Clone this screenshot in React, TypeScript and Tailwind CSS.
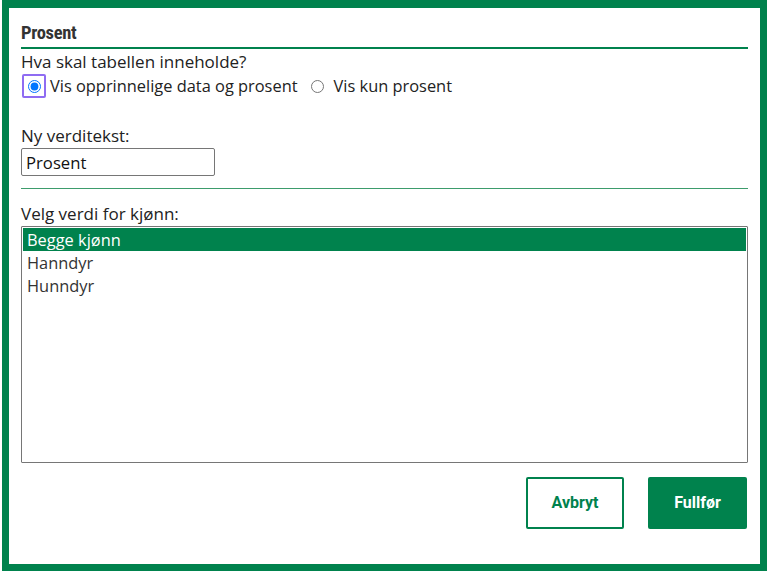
import React, { useState } from 'react';

const GREEN = '#00824d';

export default function App() {
  const [mode, setMode] = useState<'both' | 'pct'>('both');
  const [label, setLabel] = useState('Prosent');
  const [selected, setSelected] = useState(0);
  const options = ['Begge kjønn', 'Hanndyr', 'Hunndyr'];

  return (
    <div className="w-[768px] h-[572px] bg-white">
      <div className="ml-[2px] w-[765px] h-[571px] border-[7px] border-t-[8px] border-[#00824d] bg-white px-[12px] flex flex-col font-['Open_Sans',sans-serif] text-[17px] text-[#222]">
        {/* Header */}
        <div className="pt-[14px] pb-[3px] border-b-2 border-[#00824d]">
          <h2 className="h-[22px] leading-[22px] text-[18.5px] font-bold text-[#333] font-['Roboto_Condensed','DejaVu_Sans_Condensed','Roboto',sans-serif] tracking-[-0.3px]">
            Prosent
          </h2>
        </div>

        {/* Radio group */}
        <div className="mt-px leading-[24px]">Hva skal tabellen inneholde?</div>
        <div className="flex items-center h-[24px] leading-[24px] text-[16.4px]">
          <label className="flex items-center">
            <span className="w-[24px] h-[24px] ml-px border-2 border-[#8f6cf2] rounded-[2px] flex items-center justify-center">
              <input
                type="radio"
                name="mode"
                checked={mode === 'both'}
                onChange={() => setMode('both')}
                className="m-0 w-[13px] h-[13px]"
              />
            </span>
            <span className="ml-[4px]">Vis opprinnelige data og prosent</span>
          </label>
          <label className="flex items-center ml-[13px]">
            <input
              type="radio"
              name="mode"
              checked={mode === 'pct'}
              onChange={() => setMode('pct')}
              className="m-0 w-[13px] h-[13px]"
            />
            <span className="ml-[10px]">Vis kun prosent</span>
          </label>
        </div>

        {/* New value text */}
        <div className="mt-[26px] leading-[24px]">Ny verditekst:</div>
        <input
          value={label}
          onChange={(e) => setLabel(e.target.value)}
          className="w-[194px] h-[28px] border border-[#767676] rounded-[2px] px-[4px] text-[16.7px] text-[#111] outline-none"
        />
        <div className="mt-[12px] border-t border-[#3d9c6c]" />

        {/* Listbox */}
        <div className="mt-[12px] leading-[25px]">Velg verdi for kjønn:</div>
        <div className="h-[237px] border border-[#767676] rounded-[1px] p-px text-[16.4px]">
          {options.map((o, i) => (
            <div
              key={o}
              onClick={() => setSelected(i)}
              className={
                i === selected
                  ? 'h-[23px] leading-[23px] px-[4px] bg-[#00824d] text-white'
                  : 'h-[23px] leading-[23px] px-[4px] text-[#333]'
              }
            >
              {o}
            </div>
          ))}
        </div>

        {/* Buttons */}
        <div className="mt-[14px] flex justify-end gap-[24px] pr-px font-['Roboto',sans-serif] font-bold text-[16px]">
          <button className="w-[98px] h-[52px] border-2 border-[#00824d] rounded-[2px] bg-white text-[#00824d]">
            Avbryt
          </button>
          <button
            className="w-[99px] h-[52px] rounded-[2px] text-white"
            style={{ backgroundColor: GREEN }}
          >
            Fullfør
          </button>
        </div>
      </div>
    </div>
  );
}
